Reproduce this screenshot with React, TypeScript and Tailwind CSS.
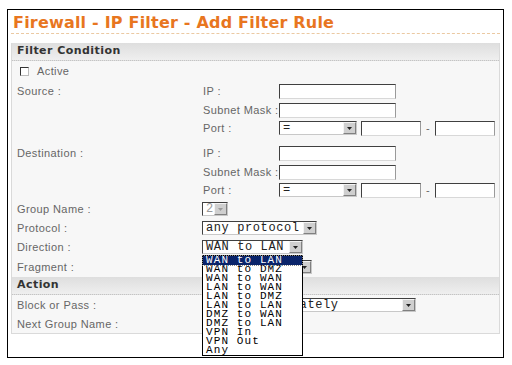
import React from "react";

const labelCls = "font-['Liberation_Sans',Arial,sans-serif] text-[11px] tracking-[0.4px] text-[#666]";
const monoCls = "font-['Liberation_Mono','Courier_New',monospace] text-[12px] tracking-[0.6px]";

const directions = [
  "WAN to LAN",
  "WAN to DMZ",
  "WAN to WAN",
  "LAN to WAN",
  "LAN to DMZ",
  "LAN to LAN",
  "DMZ to WAN",
  "DMZ to LAN",
  "VPN In",
  "VPN Out",
  "Any",
];

function ArrowBtn({ disabled }: { disabled?: boolean }) {
  return (
    <span className="flex w-[13px] shrink-0 items-center justify-center border border-t-[#f4f4f4] border-l-[#f4f4f4] border-r-[#808080] border-b-[#808080] bg-[#cfcfcf]">
      <svg width="5" height="3" viewBox="0 0 5 3">
        <path d="M0 0h5L2.5 3z" fill={disabled ? "#9a9a9a" : "#222"} />
      </svg>
    </span>
  );
}

function Select({
  className,
  text,
  disabled,
}: {
  className: string;
  text: string;
  disabled?: boolean;
}) {
  return (
    <div
      className={`flex h-[14px] items-stretch border border-t-[#404040] border-l-[#404040] border-r-[#c8c8c8] border-b-[#c8c8c8] bg-white ${className}`}
    >
      <span
        className={`flex-1 overflow-hidden whitespace-nowrap pl-[3px] leading-[12px] ${monoCls} ${
          disabled ? "text-[#999]" : "text-[#222]"
        }`}
      >
        {text}
      </span>
      <ArrowBtn disabled={disabled} />
    </div>
  );
}

function TextBox({ className }: { className: string }) {
  return (
    <div
      className={`h-[15px] border border-t-[#404040] border-l-[#404040] border-r-[#9a9a9a] border-b-[#d8d8d8] bg-white ${className}`}
    />
  );
}

function Row({
  label,
  h,
  children,
}: {
  label?: string;
  h: string;
  children?: React.ReactNode;
}) {
  return (
    <div className={`flex items-center ${h}`}>
      <div className={`w-[190px] shrink-0 pl-[5px] ${labelCls}`}>{label}</div>
      {children}
    </div>
  );
}

function SubRow({
  label,
  h,
  group,
  children,
}: {
  label: string;
  h: string;
  group?: string;
  children: React.ReactNode;
}) {
  return (
    <div className={`flex items-center ${h}`}>
      <div className={`w-[190px] shrink-0 self-start pl-[5px] pt-[1px] ${labelCls}`}>{group}</div>
      <div className={`w-[77px] shrink-0 whitespace-nowrap pl-[1px] ${labelCls}`}>{label}</div>
      {children}
    </div>
  );
}

function PortInputs() {
  return (
    <div className="flex items-center">
      <Select className="w-[78px]" text="=" />
      <TextBox className="ml-[4px] w-[60px]" />
      <span className={`w-[14px] text-center ${labelCls}`}>-</span>
      <TextBox className="w-[60px]" />
    </div>
  );
}

function Band({ title }: { title: string }) {
  return (
    <div className="flex h-[18px] items-center border-b border-dotted border-[#c4c4c4] bg-gradient-to-b from-[#dedede] to-[#efefef] pl-[5px]">
      <span className="font-['DejaVu_Sans',Verdana,sans-serif] text-[11px] font-bold tracking-[0.45px] text-[#333]">
        {title}
      </span>
    </div>
  );
}

export default function App() {
  return (
    <div className="min-h-[365px] w-[512px] bg-white pl-[7px] pt-[9px]">
      <div className="h-[349px] w-[497px] border border-black bg-white">
        <div className="mx-[3px] h-[24px] border-b border-dashed border-[#ebc9a2] pl-[2px]">
          <span className="font-['DejaVu_Sans',Verdana,sans-serif] text-[16px] font-bold leading-[22px] tracking-[0.2px] text-[#e8761f]">
            Firewall - IP Filter - Add Filter Rule
          </span>
        </div>

        <div className="mx-[3px] mt-[9px] border-x border-b border-[#dadada] bg-[#f7f7f7]">
          <Band title="Filter Condition" />

          <div className="flex h-[21px] items-center pl-[8px]">
            <span className="h-[9px] w-[9px] border border-t-[#333] border-l-[#333] border-r-[#bbb] border-b-[#bbb] bg-white" />
            <span className={`ml-[8px] ${labelCls}`}>Active</span>
          </div>

          <SubRow group="Source :" label="IP :" h="h-[19px]">
            <TextBox className="w-[117px]" />
          </SubRow>
          <SubRow label="Subnet Mask :" h="h-[18px]">
            <TextBox className="w-[117px]" />
          </SubRow>
          <SubRow label="Port :" h="h-[18px]">
            <PortInputs />
          </SubRow>

          <div className="mt-[7px]">
            <SubRow group="Destination :" label="IP :" h="h-[19px]">
              <TextBox className="w-[117px]" />
            </SubRow>
            <SubRow label="Subnet Mask :" h="h-[18px]">
              <TextBox className="w-[117px]" />
            </SubRow>
            <SubRow label="Port :" h="h-[18px]">
              <PortInputs />
            </SubRow>
          </div>

          <Row label="Group Name :" h="h-[20px]">
            <Select className="w-[26px]" text="2" disabled />
          </Row>
          <Row label="Protocol :" h="h-[18px]">
            <Select className="w-[115px]" text="any protocol" />
          </Row>
          <Row label="Direction :" h="h-[20px]">
            <div className="relative">
              <Select className="w-[101px]" text="WAN to LAN" />
              {/* open dropdown list */}
              <ul className="absolute left-0 top-[15px] z-10 w-[101px] border border-black bg-white font-['Liberation_Mono','Courier_New',monospace] text-[11px] leading-[9px] tracking-[1.1px] text-black">
                {directions.map((d, i) => (
                  <li
                    key={d}
                    className={`h-[9px] whitespace-pre pl-[3px] ${
                      i === 0 ? "bg-[#0a246a] text-white outline-1 outline-dotted outline-[#888]" : ""
                    }`}
                  >
                    {d}
                  </li>
                ))}
              </ul>
            </div>
          </Row>
          <Row label="Fragment :" h="h-[20px]">
            <Select className="w-[110px]" text="Don't care" />
          </Row>

          <Band title="Action" />

          <Row label="Block or Pass :" h="h-[20px]">
            <Select className="w-[214px]" text="Block Immediately" />
          </Row>
          <Row label="Next Group Name :" h="h-[18px]">
            <Select className="w-[26px]" text="1" />
          </Row>
        </div>
      </div>
    </div>
  );
}
